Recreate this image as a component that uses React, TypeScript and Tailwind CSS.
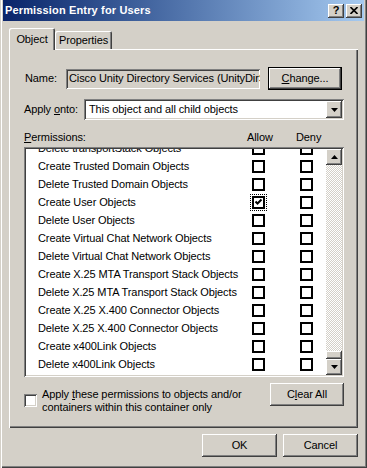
const raised =
  "shadow-[inset_-1px_-1px_#404040,inset_1px_1px_#ffffff,inset_-2px_-2px_#808080,inset_2px_2px_#d4d0c8]";
const sunken =
  "shadow-[inset_1px_1px_#808080,inset_-1px_-1px_#ffffff,inset_2px_2px_#404040,inset_-2px_-2px_#d4d0c8]";

const rows = [
  "Delete transportStack Objects",
  "Create Trusted Domain Objects",
  "Delete Trusted Domain Objects",
  "Create User Objects",
  "Delete User Objects",
  "Create Virtual Chat Network Objects",
  "Delete Virtual Chat Network Objects",
  "Create X.25 MTA Transport Stack Objects",
  "Delete X.25 MTA Transport Stack Objects",
  "Create X.25 X.400 Connector Objects",
  "Delete X.25 X.400 Connector Objects",
  "Create x400Link Objects",
  "Delete x400Link Objects",
];

function Box({ checked, focused }: { checked?: boolean; focused?: boolean }) {
  return (
    <div
      className={
        "flex h-[13px] w-[13px] items-center justify-center border-2 border-black bg-white " +
        (focused ? "outline outline-1 outline-offset-1 outline-dotted outline-black" : "")
      }
    >
      {checked ? (
        <svg width="9" height="9" viewBox="0 0 9 9">
          <path d="M1.5 3.5 L3.5 5.5 L7.5 1.5" fill="none" stroke="black" strokeWidth="2" />
        </svg>
      ) : null}
    </div>
  );
}

function Arrow({ down }: { down?: boolean }) {
  return (
    <svg width="7" height="4" viewBox="0 0 7 4">
      <path d={down ? "M0 0 H7 L3.5 4 Z" : "M0 4 H7 L3.5 0 Z"} fill="black" />
    </svg>
  );
}

export default function App() {
  return (
    <div className="flex h-[468px] w-[367px] flex-col bg-[#d4d0c8] px-[3px] pb-[3px] font-['Liberation_Sans',Arial,sans-serif] text-[11px] leading-[13px] tracking-[-0.1px] text-black shadow-[inset_1px_0_#d4d0c8,inset_2px_0_#ffffff,inset_-1px_-1px_#404040,inset_-2px_-2px_#808080]">
      {/* title bar */}
      <div className="flex h-[21px] items-center justify-between bg-linear-to-r from-[#0a246a] to-[#a6caf0] pl-[2px] pr-[2px]">
        <span className="text-[11px] font-bold tracking-[0.15px] text-white">Permission Entry for Users</span>
        <div className="flex gap-[2px]">
          <div className={`flex h-[14px] w-[16px] items-center justify-center bg-[#d4d0c8] text-[11px] font-bold ${raised}`}>
            ?
          </div>
          <div className={`flex h-[14px] w-[16px] items-center justify-center bg-[#d4d0c8] ${raised}`}>
            <svg width="8" height="7" viewBox="0 0 8 7">
              <path d="M0.5 0 L7.5 7 M7.5 0 L0.5 7" stroke="black" strokeWidth="1.6" />
            </svg>
          </div>
        </div>
      </div>

      <div className="px-[6px] pt-[7px]">
        {/* tabs */}
        <div className="flex h-[21px] items-end">
          <div className="relative z-10 -mb-px flex h-[22px] w-[46px] items-center justify-center rounded-t-[2px] bg-[#d4d0c8] shadow-[inset_1px_1px_#ffffff,inset_-1px_0_#404040,inset_-2px_0_#808080]">
            Object
          </div>
          <div className="flex h-[18px] w-[57px] items-center justify-center rounded-t-[2px] shadow-[inset_1px_1px_#ffffff,inset_-1px_0_#404040,inset_-2px_0_#808080]">
            Properties
          </div>
        </div>

        {/* panel */}
        <div className="h-[379px] w-[349px] pl-[15px] pr-[14px] pt-[18px] shadow-[inset_1px_1px_#ffffff,inset_-1px_-1px_#404040,inset_-2px_-2px_#808080]">
          <div className="flex h-[23px] items-center">
            <span className="ml-px w-[41px]">Name:</span>
            <div className={`flex h-[20px] w-[194px] items-center overflow-hidden whitespace-nowrap px-[3px] ${sunken}`}>
              Cisco Unity Directory Services (UnityDirServices)
            </div>
            <div className={`ml-[8px] flex h-[23px] w-[74px] items-center justify-center border border-black ${raised}`}>
              <span>
                <u>C</u>hange...
              </span>
            </div>
          </div>

          <div className="mt-[9px] flex h-[21px] items-center">
            <span className="w-[60px]">
              Apply <u>o</u>nto:
            </span>
            <div className={`flex h-[21px] w-[260px] items-center justify-between bg-white pl-[5px] pr-[2px] ${sunken}`}>
              <span>This object and all child objects</span>
              <div className={`flex h-[17px] w-[16px] items-center justify-center bg-[#d4d0c8] ${raised}`}>
                <Arrow down />
              </div>
            </div>
          </div>

          <div className="mt-[11px] grid h-[13px] grid-cols-[223px_49px_1fr]">
            <span>
              <u>P</u>ermissions:
            </span>
            <span>Allow</span>
            <span>Deny</span>
          </div>

          {/* permission list */}
          <div className={`mt-[3px] flex h-[230px] w-[320px] bg-white p-[2px] ${sunken}`}>
            <div className="flex-1 overflow-hidden">
              <div className="-mt-[10px]">
                {rows.map((row, i) => (
                  <div key={row} className="grid h-[18px] grid-cols-[226px_48px_1fr] items-center">
                    <span className="whitespace-nowrap pl-[12px]">{row}</span>
                    <Box checked={i === 3} focused={i === 3} />
                    <Box />
                  </div>
                ))}
              </div>
            </div>
            <div className="flex w-[16px] flex-col">
              <div className={`flex h-[16px] items-center justify-center bg-[#d4d0c8] ${raised}`}>
                <Arrow />
              </div>
              <div className="flex flex-1 flex-col justify-end bg-[repeating-conic-gradient(#ffffff_0_25%,#d4d0c8_0_50%)] bg-[length:2px_2px]">
                <div className={`h-[8px] bg-[#d4d0c8] ${raised}`} />
              </div>
              <div className={`flex h-[16px] items-center justify-center bg-[#d4d0c8] ${raised}`}>
                <Arrow down />
              </div>
            </div>
          </div>

          <div className="mt-[6px] flex justify-between">
            <div className="flex">
              <div className={`mt-[11px] h-[13px] w-[13px] bg-white ${sunken}`} />
              <div className="ml-[5px] mt-[5px]">
                Apply <u>t</u>hese permissions to objects and/or
                <br />
                containers within this container only
              </div>
            </div>
            <div className={`flex h-[23px] w-[74px] items-center justify-center ${raised}`}>
              <span>
                C<u>l</u>ear All
              </span>
            </div>
          </div>
        </div>

        <div className="mt-[6px] flex justify-end gap-[6px]">
          <div className={`flex h-[23px] w-[75px] items-center justify-center ${raised}`}>OK</div>
          <div className={`flex h-[23px] w-[75px] items-center justify-center ${raised}`}>Cancel</div>
        </div>
      </div>
    </div>
  );
}
